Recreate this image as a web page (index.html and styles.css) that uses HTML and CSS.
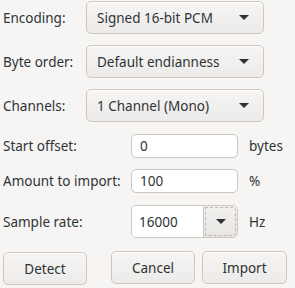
FILE: index.html
```html
<!DOCTYPE html>
<html lang="en">

<head>
    <meta charset="UTF-8">
    <meta name="viewport" content="width=device-width, initial-scale=1.0">
    <title>Import Raw Data</title>
    <link rel="stylesheet" href="styles.css">
</head>

<body>
    <div class="dialog">
        <div class="row row-first">
            <span class="label label-short">Encoding:</span>
            <div class="combo">
                <span>Signed 16-bit PCM</span>
                <svg class="arrow" width="10" height="5" viewBox="0 0 10 5"><path d="M0 0H10L5 5Z"/></svg>
            </div>
        </div>
        <div class="row">
            <span class="label label-short">Byte order:</span>
            <div class="combo">
                <span>Default endianness</span>
                <svg class="arrow" width="10" height="5" viewBox="0 0 10 5"><path d="M0 0H10L5 5Z"/></svg>
            </div>
        </div>
        <div class="row">
            <span class="label label-short">Channels:</span>
            <div class="combo">
                <span>1 Channel (Mono)</span>
                <svg class="arrow" width="10" height="5" viewBox="0 0 10 5"><path d="M0 0H10L5 5Z"/></svg>
            </div>
        </div>
        <div class="row row-entry">
            <span class="label label-long">Start offset:</span>
            <div class="entry">0</div>
            <span class="unit">bytes</span>
        </div>
        <div class="row row-entry2">
            <span class="label label-long">Amount to import:</span>
            <div class="entry">100</div>
            <span class="unit">%</span>
        </div>
        <div class="row row-spin">
            <span class="label label-long">Sample rate:</span>
            <div class="spin">
                <div class="spin-text">16000</div>
                <div class="spin-btn">
                    <div class="focus">
                        <svg width="10" height="5" viewBox="0 0 10 5"><path d="M0 0H10L5 5Z"/></svg>
                    </div>
                </div>
            </div>
            <span class="unit">Hz</span>
        </div>
        <div class="buttons">
            <button type="button" class="btn btn-detect">Detect</button>
            <button type="button" class="btn btn-cancel">Cancel</button>
            <button type="button" class="btn btn-import">Import</button>
        </div>
    </div>
</body>
</html>
```

FILE: styles.css
```css
* {
    box-sizing: border-box;
}

body {
    margin: 0;
    background-color: #f6f5f4;
    color: #2e3436;
    font-family: "Noto Sans", sans-serif;
    font-size: 13.5px;
}

.dialog {
    display: flex;
    flex-direction: column;
    padding: 1px 0 0 3px;
}

.row {
    display: flex;
    align-items: center;
    margin-top: 11px;
}

.row-first {
    margin-top: 0;
}

.row-entry {
    margin-top: 12px;
}

.row-entry2 {
    margin-top: 11px;
}

.row-spin {
    margin-top: 12px;
}

.label-short {
    width: 83px;
}

.label-long {
    width: 128px;
}

.combo {
    width: 178px;
    height: 33px;
    display: flex;
    align-items: center;
    justify-content: space-between;
    padding: 0 14px 0 10px;
    border: 1px solid #cdc7c2;
    border-radius: 5px;
    background: linear-gradient(to bottom, #f6f5f4, #edebe9);
    box-shadow: inset 0 1px #ffffff;
}

.arrow path,
.spin-btn path {
    fill: #2e3436;
}

.entry {
    width: 107px;
    height: 24px;
    display: flex;
    align-items: center;
    padding-left: 8px;
    background-color: #ffffff;
    border: 1px solid #cdc7c2;
    border-radius: 5px;
}

.unit {
    margin-left: 11px;
}

.spin {
    width: 107px;
    height: 33px;
    display: flex;
    border: 1px solid #cdc7c2;
    border-radius: 5px;
    overflow: hidden;
}

.spin-text {
    flex: 1;
    display: flex;
    align-items: center;
    padding-left: 7px;
    background-color: #ffffff;
}

.spin-btn {
    width: 34px;
    padding: 1px;
    border-left: 1px solid #cdc7c2;
    background: linear-gradient(to bottom, #f2f1ef, #e8e6e3);
}

.focus {
    height: 100%;
    display: flex;
    align-items: center;
    justify-content: center;
    border: 1px dashed #bdb8b3;
    border-radius: 0 4px 4px 0;
}

.buttons {
    display: flex;
    align-items: flex-start;
    margin-top: 13px;
}

.btn {
    height: 33px;
    margin: 0;
    padding: 0;
    font-family: "Noto Sans", sans-serif;
    font-size: 13.5px;
    color: #2e3436;
    border: 1px solid #cdc7c2;
    border-radius: 5px;
    background: linear-gradient(to bottom, #f6f5f4, #edebe9);
    box-shadow: inset 0 1px #ffffff;
}

.btn-detect {
    width: 84px;
    margin-top: 1px;
}

.btn-cancel {
    width: 84px;
    margin-left: 24px;
}

.btn-import {
    width: 85px;
    margin-left: 7px;
}
```
